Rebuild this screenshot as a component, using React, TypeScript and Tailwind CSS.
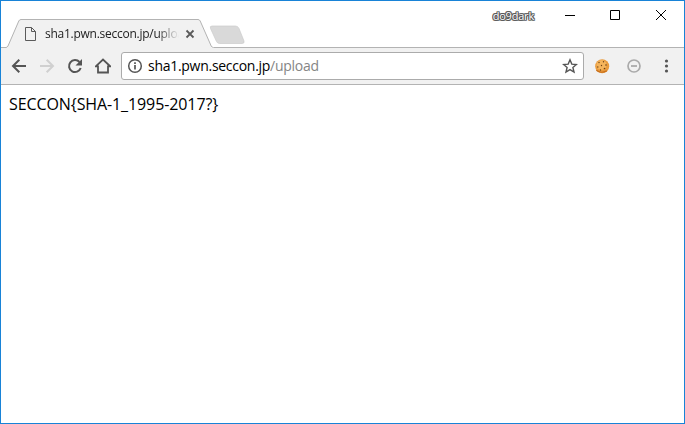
import type { ReactNode } from "react";

const FONT = "font-['Open_Sans','Noto_Sans',sans-serif]";

function Icon({ children, className = "", size = 16 }: { children: ReactNode; className?: string; size?: number }) {
  return (
    <svg width={size} height={size} viewBox={`0 0 ${size} ${size}`} className={`shrink-0 ${className}`} fill="none">
      {children}
    </svg>
  );
}

function TabStrip() {
  return (
    <div className="relative h-[47px] shrink-0 bg-white">
      <svg width="683" height="47" viewBox="1 1 683 47" className="absolute inset-0" fill="none">
        <path d="M210.500 28.500Q209.500 26 212 26H235.500Q238 26 239 28.500L244 41Q244.700 43.500 242 43.500H219.500Q217.500 43.500 216.500 41.500Z" fill="#d9d9d9" stroke="#cbcbcb" strokeWidth=".7" />
        <path d="M7 48L18.800 21Q19.500 19.500 21 19.500H198Q199.500 19.500 200.200 21L212 48Z" fill="#f1f1f1" />
        <path d="M1 47.500H6Q7.200 47.500 8 46L18.800 21Q19.500 19.500 21 19.500H198Q199.500 19.500 200.200 21L211.200 46Q212 47.500 213.500 47.500H684" stroke="#b3b3b3" />
      </svg>
      <div className="relative flex h-full">
        <div className="mt-[18px] flex h-[30px] w-[197px] items-center pl-[22px]">
          <Icon>
            <path d="M2.500 1.500H8.500L12.500 5.500V14.500H2.500ZM8.500 1.500V5.500H12.500" stroke="#5a5a5a" />
          </Icon>
          <div className="ml-[6px] w-[134px] overflow-hidden whitespace-nowrap text-[12px] leading-[18px] tracking-[-0.26px] text-[#222] [mask-image:linear-gradient(to_right,black_112px,transparent_134px)]">
            sha1.pwn.seccon.jp/upload
          </div>
          <Icon size={10} className="ml-[6px]">
            <path d="M1.500 1.500L8.500 8.500M8.500 1.500L1.500 8.500" stroke="#5a5a5a" strokeWidth="1.800" />
          </Icon>
        </div>
        <div className="ml-auto flex h-[28px] items-center">
          <span className="mr-[30px] mt-px text-[11px] leading-4 tracking-[-0.2px] text-white [text-shadow:-1px_0_#555,1px_0_#555,0_1px_#555,0_-1px_#555,1px_1px_#777,-1px_-1px_#777,1px_-1px_#777,-1px_1px_#777]">do9dark</span>
          <Icon size={12} className="mr-[33px]"><path d="M1 6.500H11" stroke="#000" /></Icon>
          <Icon size={12} className="mr-[34px]"><path d="M1.500 1.500H10.500V10.500H1.500Z" stroke="#000" /></Icon>
          <Icon size={12} className="mr-[17px]"><path d="M1 1L11 11M11 1L1 11" stroke="#000" /></Icon>
        </div>
      </div>
    </div>
  );
}

function Toolbar() {
  return (
    <div className="flex h-[37px] shrink-0 items-center border-b border-[#b3b3b3] bg-[#f1f1f1] pl-[10px]">
      <Icon className="mr-3"><path d="M15 8H2.500M8.300 1.700L2 8L8.300 14.300" stroke="#555" strokeWidth="2" /></Icon>
      <Icon className="mr-3"><path d="M1 8H13.500M7.700 1.700L14 8L7.700 14.300" stroke="#d0d0d0" strokeWidth="2" /></Icon>
      <Icon className="mr-3">
        <path d="M13.700 10A6 6 0 1 1 12.500 4" stroke="#555" strokeWidth="2" />
        <path d="M15 1V7.500H8.500Z" fill="#555" />
      </Icon>
      <Icon className="mr-[10px]">
        <path d="M.8 8.300L8 1.500L15.200 8.300H13V14.500H3V8.300Z" stroke="#555" strokeWidth="1.800" />
      </Icon>
      <div className="flex h-7 w-[463px] items-center rounded-[3px] border border-[#ababab] bg-white pl-[5px] pr-[5px]">
        <Icon>
          <circle cx="8" cy="8" r="6.300" stroke="#555" strokeWidth="1.500" />
          <path d="M8 7V11.500M8 4.300V6" stroke="#555" strokeWidth="1.700" />
        </Icon>
        <span className="ml-[5px] whitespace-nowrap text-[14px] leading-5 tracking-[-0.28px] text-black">
          sha1.pwn.seccon.jp<span className="text-[#858585]">/upload</span>
        </span>
        <Icon className="ml-auto">
          <path d="M8 1.800L9.800 6.100L14.400 6.500L10.900 9.500L12 14.100L8 11.600L4 14.100L5.100 9.500L1.600 6.500L6.200 6.100Z" stroke="#555" strokeWidth="1.400" />
        </Icon>
      </div>
      <Icon className="ml-[10px] mr-4">
        <circle cx="8.200" cy="8.200" r="7" fill="#e99b3d" />
        <circle cx="7.500" cy="7" r="5" fill="#f5b45b" />
        <path d="M2.300 12.300Q7 16 12.800 12.700" stroke="#c86f1d" strokeWidth="1.200" />
        <g fill="#6b4218">
          <circle cx="5" cy="4.500" r=".7" /><circle cx="9.500" cy="3.800" r=".7" />
          <circle cx="7.500" cy="7.500" r=".7" /><circle cx="12" cy="7" r=".8" />
          <circle cx="3.800" cy="9" r=".7" /><circle cx="10.500" cy="10.500" r=".8" />
          <circle cx="6.500" cy="12" r=".7" />
        </g>
      </Icon>
      <Icon className="mr-[17px]">
        <circle cx="8" cy="8" r="6" stroke="#aaa" strokeWidth="1.700" />
        <path d="M5 8H11" stroke="#aaa" strokeWidth="1.800" />
      </Icon>
      <Icon className="-ml-px">
        <g fill="#555"><circle cx="8.500" cy="3" r="1.600" /><circle cx="8.500" cy="8" r="1.600" /><circle cx="8.500" cy="13" r="1.600" /></g>
      </Icon>
    </div>
  );
}

export default function App() {
  return (
    <div className={`flex h-[424px] w-[685px] flex-col overflow-hidden border border-[#1883d7] bg-white ${FONT}`}>
      <TabStrip />
      <Toolbar />
      <main className="flex-1 px-2 pt-2 text-[16px] leading-[22px] tracking-[-0.1px] text-black">SECCON{"{"}SHA-1_1995-2017?{"}"}</main>
    </div>
  );
}
